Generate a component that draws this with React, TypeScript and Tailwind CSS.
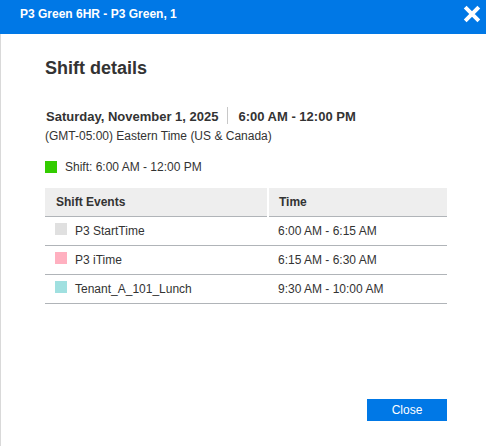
const FONT = "font-['Liberation_Sans',Arial,sans-serif]";

const events = [
  { name: 'P3 StartTime', time: '6:00 AM - 6:15 AM', color: 'bg-[#e0e0e0]' },
  { name: 'P3 iTime', time: '6:15 AM - 6:30 AM', color: 'bg-[#ffb0c0]' },
  { name: 'Tenant_A_101_Lunch', time: '9:30 AM - 10:00 AM', color: 'bg-[#a0e0e0]' },
];

export default function App() {
  return (
    <div className={`${FONT} flex h-[446px] w-[486px] flex-col overflow-hidden bg-white text-[12px] text-[#333]`}>
      {/* Header */}
      <div className="flex h-[34px] shrink-0 items-center justify-between bg-[#0078e6] pl-[20px] pr-[5px] text-white">
        <span className="text-[12px] font-bold leading-[28px] mb-[6px]">P3 Green 6HR - P3 Green, 1</span>
        <svg width="18" height="18" viewBox="0 0 18 18" className="mb-[7px]" aria-label="Close">
          <path d="M3 3 L15 15 M15 3 L3 15" stroke="#fff" strokeWidth="4.4" strokeLinecap="square" fill="none" transform="translate(9 9) scale(.9) translate(-9 -9)" />
        </svg>
      </div>

      {/* Body */}
      <div className="flex flex-1 flex-col border-l border-[#d9d9d9] pl-[44px] pr-[39px]">
        <h1 className="mt-[23px] text-[18px] font-bold leading-[22px]">Shift details</h1>

        <div className="mt-[29px] flex h-[18px] items-center text-[13px] font-bold">
          <span className="pl-px">Saturday, November 1, 2025</span>
          <span className="-mt-[3px] ml-[9px] mr-[10px] h-[17px] w-px bg-[#c8c8c8]" />
          <span>6:00 AM - 12:00 PM</span>
        </div>
        <div className="mt-[2px] leading-[16px]">(GMT-05:00) Eastern Time (US &amp; Canada)</div>

        <div className="mt-[15px] flex h-[16px] items-center gap-[8px]">
          <span className="size-[12px] bg-[#33cc00]" />
          <span>Shift: 6:00 AM - 12:00 PM</span>
        </div>

        {/* Events table */}
        <table className="mt-[13px] w-full table-fixed border-collapse">
          <thead>
            <tr className="h-[28px] text-left font-bold">
              <th className="w-[223px] border-b-[1px] border-r-2 border-r-white border-b-[#b0b4b8] bg-[#eeeeee] pl-[11px]">Shift Events</th>
              <th className="border-b-[1px] border-b-[#b0b4b8] bg-[#eeeeee] pl-[10px]">Time</th>
            </tr>
          </thead>
          <tbody>
            {events.map((e) => (
              <tr key={e.name} className="h-[29px] border-b border-[#b0b4b8]">
                <td className="pl-[10px]">
                  <div className="flex items-center gap-[8px]">
                    <span className={`mb-[3px] size-[12px] ${e.color}`} />
                    <span>{e.name}</span>
                  </div>
                </td>
                <td className="pl-[10px]">{e.time}</td>
              </tr>
            ))}
          </tbody>
        </table>

        <div className="mt-[95px] flex justify-end">
          <button className="h-[22px] w-[80px] bg-[#0078e6] text-[12px] font-normal text-white">Close</button>
        </div>
      </div>
    </div>
  );
}
